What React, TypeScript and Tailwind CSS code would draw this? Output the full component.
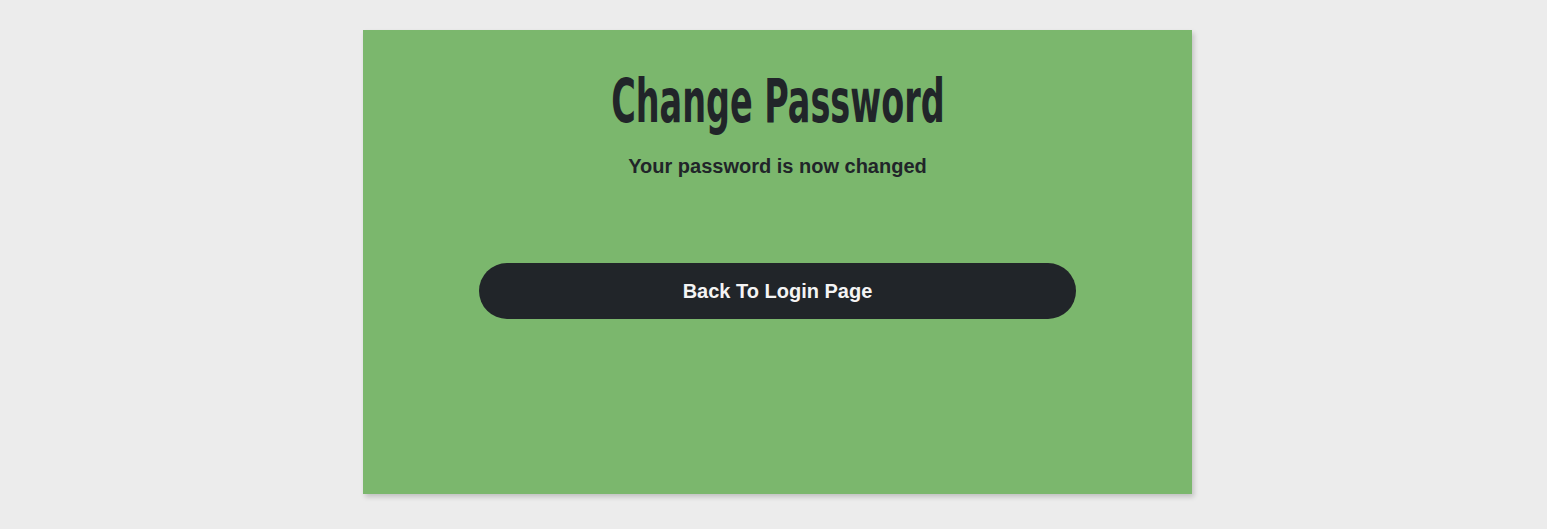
const App = () => {
  return (
    <div className="min-h-[529px] bg-[#ececec] pt-[30px] pl-[8px] flex justify-center items-start">
      <div className="w-[829px] h-[464px] bg-[#7bb76d] shadow-[2px_3px_5px_rgba(0,0,0,0.18)] flex flex-col items-center">
        <h1 className="mt-[41px] text-[60px] leading-[60px] text-[#212529] font-bold whitespace-nowrap scale-x-[0.62] font-['DejaVu_Sans_Condensed','DejaVu_Sans',sans-serif]">
          Change Password
        </h1>
        <p className="mt-[23px] text-[20px] leading-[24px] font-bold text-[#212529] font-['Liberation_Sans',Arial,sans-serif]">
          Your password is now changed
        </p>
        <button className="mt-[85px] w-[597px] h-[56px] rounded-full bg-[#212529] text-[#f4f4f4] text-[20px] font-bold font-['Liberation_Sans',Arial,sans-serif]">
          Back To Login Page
        </button>
      </div>
    </div>
  );
};

export default App;
